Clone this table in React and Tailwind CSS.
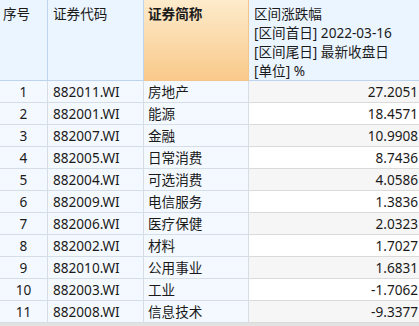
import React from 'react';

const rows = [
  ['1', '882011.WI', '房地产', '27.2051'],
  ['2', '882001.WI', '能源', '18.4571'],
  ['3', '882007.WI', '金融', '10.9908'],
  ['4', '882005.WI', '日常消费', '8.7436'],
  ['5', '882004.WI', '可选消费', '4.0586'],
  ['6', '882009.WI', '电信服务', '1.3836'],
  ['7', '882006.WI', '医疗保健', '2.0323'],
  ['8', '882002.WI', '材料', '1.7027'],
  ['9', '882010.WI', '公用事业', '1.6831'],
  ['10', '882003.WI', '工业', '-1.7062'],
  ['11', '882008.WI', '信息技术', '-9.3377'],
];

const font = { fontFamily: '"Noto Sans", "Noto Sans CJK SC", sans-serif' };

const App = () => {
  return (
    <div className="w-[419px] h-[326px] bg-[#e2e2e2] overflow-hidden text-[13.6px] text-[#1a1a1a]" style={font}>
      <div className="grid grid-cols-[48px_96px_105px_170px]">
        {/* 表头 */}
        <div className="h-[81px] bg-[#ebf5ff] border-r border-b border-[#bed4ee] pl-[3px] pt-[4px] leading-[19px]">序号</div>
        <div className="h-[81px] bg-[#ebf5ff] border-r border-b border-[#bed4ee] pl-[5px] pt-[4px] leading-[19px]">证券代码</div>
        <div className="h-[81px] bg-gradient-to-b from-[#fdebcb] to-[#f9c98a] border-r border-b border-[#f3c58a] pl-[4px] pt-[4px] leading-[19px] font-bold">证券简称</div>
        <div className="h-[81px] bg-[#ebf5ff] border-b border-[#bed4ee] pl-[5px] pt-[4px] leading-[19px]">
          <div>区间涨跌幅</div>
          <div>[区间首日] 2022-03-16</div>
          <div>[区间尾日] 最新收盘日</div>
          <div>[单位] %</div>
        </div>

        {/* 数据行 */}
        {rows.map((r, i) => (
          <React.Fragment key={r[0]}>
            <div className="h-[22px] bg-[#f4f9ff] border-r border-b border-[#d5dde6] text-center leading-[21px]">{r[0]}</div>
            <div className="h-[22px] bg-[#f4f9ff] border-r border-b border-[#d5dde6] pl-[5px] leading-[21px]">{r[1]}</div>
            <div className="h-[22px] bg-[#f4f9ff] border-r border-b border-[#d5dde6] pl-[4px] leading-[21px]">{r[2]}</div>
            <div className={`h-[22px] border-b border-[#dadada] text-right pr-[1px] leading-[21px] ${i % 2 === 0 ? 'bg-[#f6f6f6]' : 'bg-white'}`}>{r[3]}</div>
          </React.Fragment>
        ))}
      </div>
    </div>
  );
};

export default App;
